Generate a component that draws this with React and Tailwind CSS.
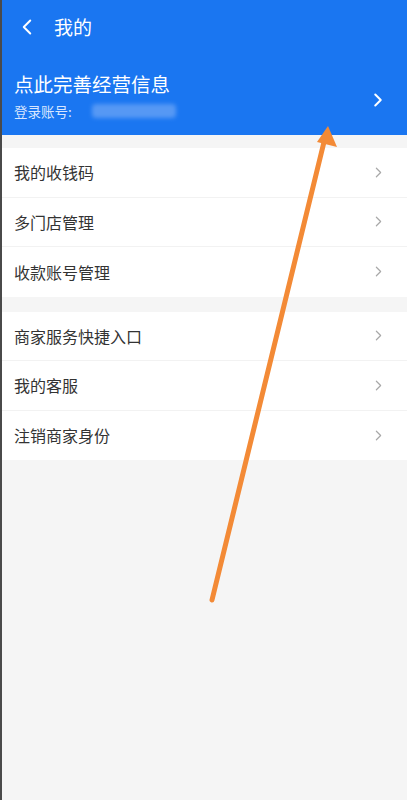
import { ChevronLeft, ChevronRight } from "lucide-react";

const groups = [
  ["我的收钱码", "多门店管理", "收款账号管理"],
  ["商家服务快捷入口", "我的客服", "注销商家身份"],
];

function Row({ label }) {
  return (
    <div className="flex h-[49.5px] items-center justify-between bg-white pl-[12px] pr-[20px]">
      <span className="text-[16px] text-[#333]">{label}</span>
      <ChevronRight size={17} strokeWidth={1.7} className="text-[#a8a8a8]" />
    </div>
  );
}

export default function App() {
  return (
    <div
      className="relative h-[800px] w-[407px] overflow-hidden border-l-2 border-[#4a4a4a] bg-[#f5f5f5]"
      style={{ fontFamily: '"Noto Sans CJK SC", "Noto Sans", sans-serif' }}
    >
      <div className="bg-[#1a76f1] text-white">
        <div className="flex h-[54px] items-center gap-[14px] pl-[12px]">
          <ChevronLeft size={26} strokeWidth={1.8} />
          <span className="text-[19px]">我的</span>
        </div>
        <div className="flex h-[81px] items-center justify-between pl-[12px] pr-[18px]">
          <div className="pt-[2px]">
            <div className="text-[19.5px] leading-[28px]">点此完善经营信息</div>
            <div className="mt-[3px] flex items-center gap-[20px] text-[13.5px] text-[#d7e6ff]">
              <span>登录账号:</span>
              <span className="h-[14px] w-[84px] rounded-sm bg-[#7fb0f7] opacity-60 blur-[2px]" />
            </div>
          </div>
          <ChevronRight size={22} strokeWidth={2.2} className="mt-[10px]" />
        </div>
      </div>

      <div className="mt-[13px] flex flex-col gap-[15px]">
        {groups.map((g, gi) => (
          <div key={gi} className="divide-y divide-[#f2f2f2] bg-white">
            {g.map((label) => (
              <Row key={label} label={label} />
            ))}
          </div>
        ))}
      </div>

      {/* annotation arrow */}
      <svg className="pointer-events-none absolute left-0 top-0" width="407" height="800" viewBox="0 0 407 800">
        <line x1="210" y1="600" x2="322" y2="142" stroke="#f38a36" strokeWidth="5" strokeLinecap="round" />
        <polygon points="326,126 335,147 315,142" fill="#f38a36" />
      </svg>
    </div>
  );
}
